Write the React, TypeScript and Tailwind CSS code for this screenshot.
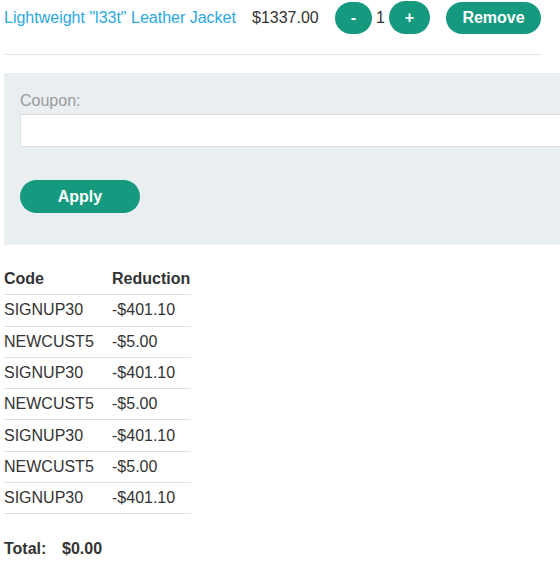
import React from "react";

const coupons = [
  { code: "SIGNUP30", reduction: "-$401.10" },
  { code: "NEWCUST5", reduction: "-$5.00" },
  { code: "SIGNUP30", reduction: "-$401.10" },
  { code: "NEWCUST5", reduction: "-$5.00" },
  { code: "SIGNUP30", reduction: "-$401.10" },
  { code: "NEWCUST5", reduction: "-$5.00" },
  { code: "SIGNUP30", reduction: "-$401.10" },
];

const App = () => {
  return (
    <div
      className="w-screen min-h-screen overflow-hidden bg-white text-[16px] text-[#333]"
      style={{ fontFamily: '"Liberation Sans", Arial, sans-serif' }}>
      {/* Cart row */}
      <div className="flex items-center h-[34px] pl-[4px] pt-[1px]">
        <a href="#" className="w-[248px] text-[#2aa8e0] leading-[24px]">
          Lightweight "l33t" Leather Jacket
        </a>
        <span className="w-[83px] leading-[24px]">$1337.00</span>
        <button className="w-[37px] h-[32px] rounded-full bg-[#159a80] text-white font-bold">
          -
        </button>
        <span className="w-[17px] text-center leading-[24px]">1</span>
        <button className="w-[41px] h-[33px] rounded-full bg-[#159a80] text-white font-bold">
          +
        </button>
        <button className="ml-[16px] w-[95px] h-[32px] rounded-full bg-[#159a80] text-white font-bold">
          Remove
        </button>
      </div>
      <div className="mt-[20px] ml-[4px] w-[537px] h-px bg-[#e3e3e3]" />

      {/* Coupon form */}
      <div className="mt-[18px] ml-[4px] w-[640px] bg-[#e9eef0] px-[16px] pt-[16px] pb-[32px]">
        <label className="block leading-[24px] text-[#9a9a9a]">Coupon:</label>
        <input
          type="text"
          className="block mt-[1px] w-full h-[33px] bg-white border border-[#dedede] outline-none"
        />
        <button className="mt-[33px] w-[120px] h-[33px] rounded-full bg-[#159a80] text-white font-bold">
          Apply
        </button>
      </div>

      {/* Applied coupons */}
      <div className="mt-[19px] ml-[4px] w-[187px]">
        <div className="grid grid-cols-[108px_79px] h-[31.3px] items-center border-b border-[#e0e0e0] font-bold">
          <span>Code</span>
          <span>Reduction</span>
        </div>
        {coupons.map((c, i) => (
          <div
            key={i}
            className="grid grid-cols-[108px_79px] h-[31.3px] items-center border-b border-[#e0e0e0]">
            <span>{c.code}</span>
            <span>{c.reduction}</span>
          </div>
        ))}
      </div>

      <div className="mt-[23px] ml-[4px] flex font-bold leading-[24px]">
        <span className="w-[58px]">Total:</span>
        <span>$0.00</span>
      </div>
    </div>
  );
};

export default App;
